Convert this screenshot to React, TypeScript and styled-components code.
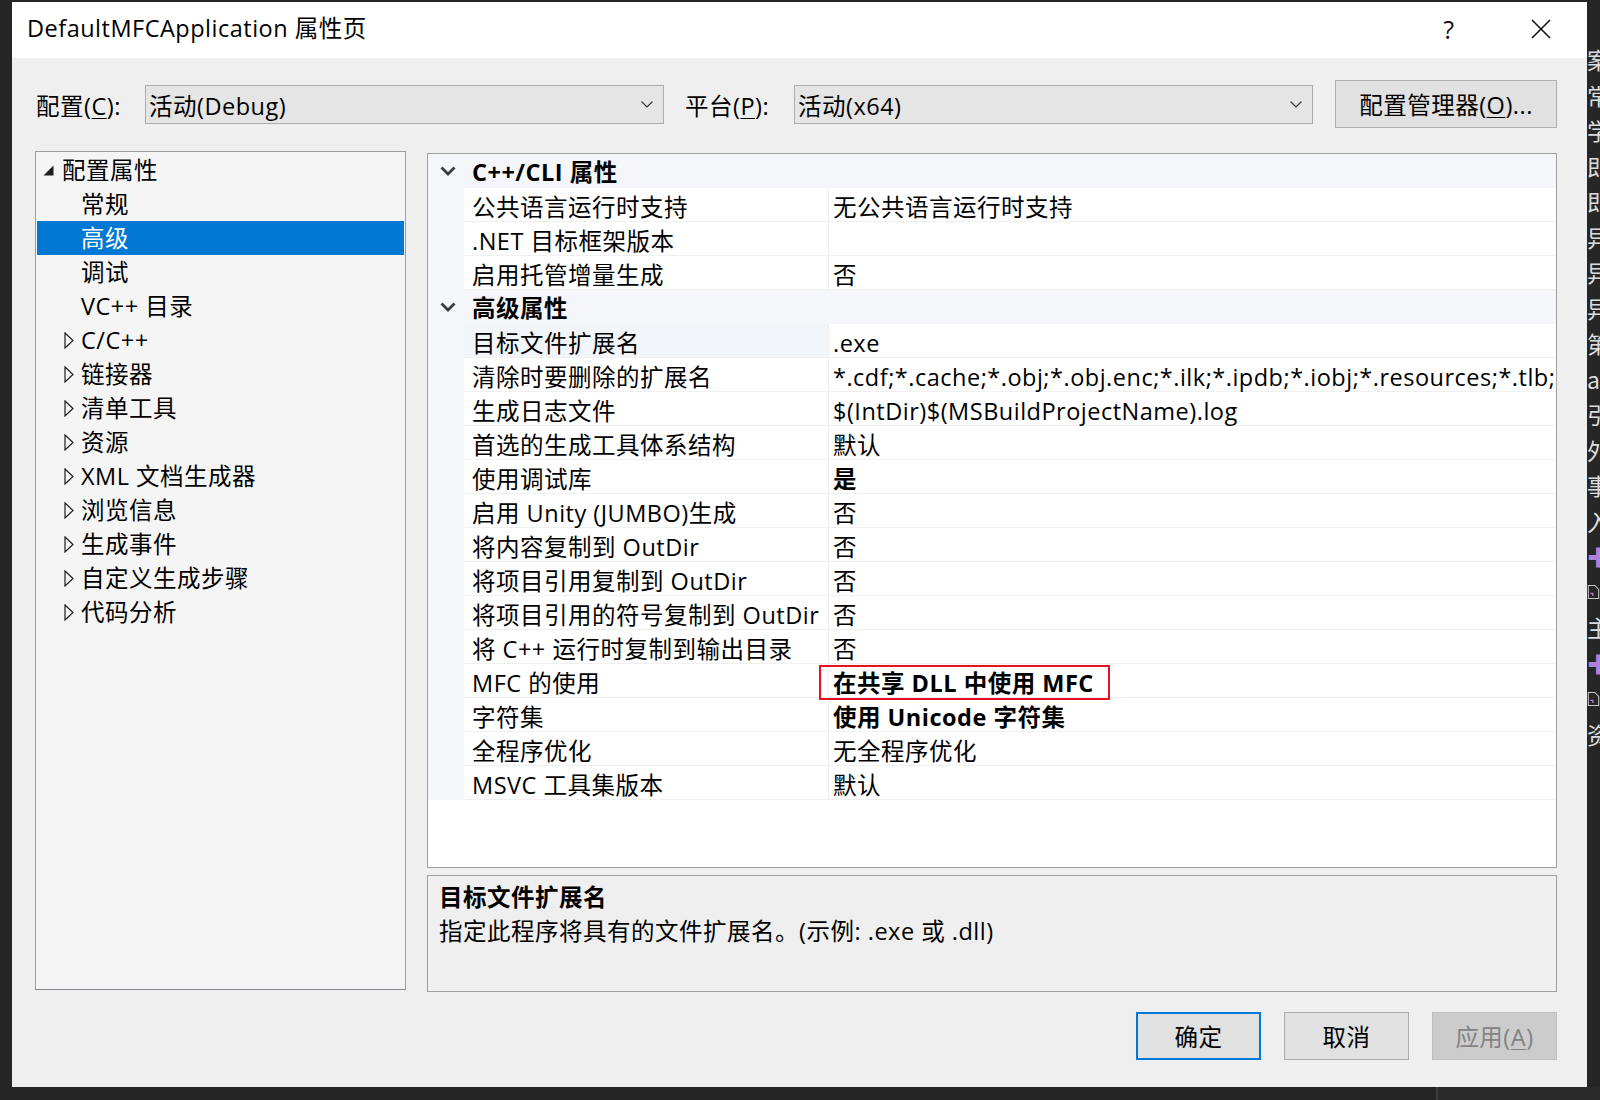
import React from "react";
import styled, { createGlobalStyle, css } from "styled-components";

const UI = `"Open Sans", "Noto Sans CJK SC", sans-serif`;

const Global = createGlobalStyle`
  html, body { margin: 0; padding: 0; background: #262626; }
  body { width: 1600px; height: 1100px; overflow: hidden; }
  #root { width: 1600px; height: 1100px; }
  * { box-sizing: border-box; }
`;

const Page = styled.div`
  width: 1600px;
  height: 1100px;
  display: flex;
  flex-direction: column;
  background: #262626;
`;

const TopArea = styled.div`
  display: flex;
  height: 1087px;
  padding: 2px 0 0 12px;
`;

const Dialog = styled.div`
  width: 1575px;
  height: 1085px;
  display: flex;
  flex-direction: column;
  font-family: ${UI};
  font-size: 23.5px;
  letter-spacing: 0.5px;
  color: #000;
  line-height: 1.36;
`;

const TitleBar = styled.div`
  height: 56px;
  background: #ffffff;
  display: flex;
  align-items: center;
  padding-left: 15px;
`;

const Title = styled.div`
  flex: 1;
  padding-bottom: 2px;
`;

const CaptionButton = styled.div`
  width: 92px;
  height: 56px;
  display: flex;
  align-items: center;
  justify-content: center;
  font-weight: 400;
  font-size: 25px;
  color: #111;
  padding-bottom: 3px;
`;

const Body = styled.div`
  flex: 1;
  background: #efefef;
  display: flex;
  flex-direction: column;
  padding: 22px 30px 27px 23px;
`;

const ConfigRow = styled.div`
  height: 48px;
  display: flex;
  align-items: center;
  padding-left: 1px;
`;

const Label = styled.div<{ $gapLeft?: number }>`
  width: 109px;
  padding-top: 5px;
  margin-left: ${(p) => p.$gapLeft ?? 0}px;
`;

const Combo = styled.div`
  width: 519px;
  height: 39px;
  background: #e5e5e5;
  border: 1px solid #acacac;
  display: flex;
  align-items: center;
  padding: 5px 10px 0 3px;
`;

const ComboText = styled.div`
  flex: 1;
`;

const ChevronWrap = styled.div`
  display: flex;
  margin-top: -4px;
`;

const Key = styled.span`
  text-decoration: underline;
  text-underline-offset: 3px;
  text-decoration-thickness: 1px;
`;

const PushButton = styled.div<{ $variant?: "default" | "primary" | "disabled"; $w: number }>`
  width: ${(p) => p.$w}px;
  height: 48px;
  display: flex;
  align-items: center;
  justify-content: center;
  padding-top: 4px;
  background: #e1e1e1;
  border: 1px solid #adadad;
  ${(p) =>
    p.$variant === "primary" &&
    css`
      border: 2px solid #0078d7;
    `}
  ${(p) =>
    p.$variant === "disabled" &&
    css`
      background: #cccccc;
      border-color: #bfbfbf;
      color: #838383;
    `}
`;

const ManagerButton = styled(PushButton)`
  margin-left: 22px;
`;

const Main = styled.div`
  display: flex;
  gap: 21px;
  margin-top: 23px;
  height: 841px;
`;

const Tree = styled.div`
  width: 372px;
  height: 839px;
  border: 1px solid #9c9c9c;
  border-bottom-color: #828790;
  background: #f5f5f5;
  padding: 1px;
`;

const TreeRow = styled.div<{ $level: number; $selected?: boolean }>`
  height: 34px;
  display: flex;
  align-items: center;
  padding-left: ${(p) => 6 + p.$level * 19}px;
  padding-top: 1px;
  background: ${(p) => (p.$selected ? "#0078d4" : "transparent")};
  color: ${(p) => (p.$selected ? "#ffffff" : "#000000")};
`;

const ArrowBox = styled.div`
  width: 19px;
  height: 33px;
  display: flex;
  align-items: center;
  flex-shrink: 0;
`;

const RightCol = styled.div`
  width: 1130px;
  margin-top: 2px;
  display: flex;
  flex-direction: column;
  gap: 7px;
`;

const Grid = styled.div`
  height: 715px;
  border: 1px solid #a0a0a0;
  background: #ffffff;
  overflow: hidden;
`;

const CatRow = styled.div`
  height: 34px;
  display: flex;
  align-items: center;
  padding-left: 12px;
  padding-top: 4px;
  background: #f4f6fa;
  font-weight: 700;
`;

const CatChevron = styled.svg`
  width: 16px;
  height: 10px;
  margin-right: 16px;
  margin-top: -4px;
  flex-shrink: 0;
`;

const PropRow = styled.div`
  height: 34px;
  display: flex;
`;

const MarginCell = styled.div`
  width: 36px;
  background: #f4f6fa;
  flex-shrink: 0;
`;

const NameCell = styled.div<{ $selected?: boolean }>`
  width: 365px;
  flex-shrink: 0;
  display: flex;
  align-items: center;
  padding-left: 8px;
  padding-top: 6px;
  border-right: 1px solid #eeeeee;
  border-bottom: 1px solid #f0f0f0;
  background: ${(p) => (p.$selected ? "#f2f5fa" : "#ffffff")};
  white-space: nowrap;
`;

const ValueCell = styled.div<{ $bold?: boolean }>`
  flex: 1;
  min-width: 0;
  position: relative;
  display: flex;
  align-items: center;
  padding-left: 4px;
  padding-top: 6px;
  border-bottom: 1px solid #f0f0f0;
  white-space: nowrap;
  font-weight: ${(p) => (p.$bold ? 700 : 400)};
`;

const ValueText = styled.div`
  min-width: 0;
  overflow-x: clip;
  overflow-y: visible;
  white-space: nowrap;
`;

const Highlight = styled.div`
  position: absolute;
  left: -10px;
  top: 1px;
  width: 291px;
  height: 35px;
  border: 2px solid #e81123;
  z-index: 2;
  pointer-events: none;
`;

const Desc = styled.div`
  height: 117px;
  border: 1px solid #a0a0a0;
  background: #efefef;
  padding: 6px 11px;
  display: flex;
  flex-direction: column;
  gap: 2px;
`;

const DescTitle = styled.div`
  font-weight: 700;
`;

const ButtonRow = styled.div`
  margin-top: 20px;
  height: 48px;
  display: flex;
  justify-content: flex-end;
  gap: 23px;
`;

const SideStrip = styled.div`
  width: 13px;
  height: 1085px;
  overflow: hidden;
  padding-top: 40px;
  font-family: "Noto Sans CJK SC", sans-serif;
  font-size: 23px;
  color: #d8d8d8;
  display: flex;
  flex-direction: column;
`;

const SideGlyph = styled.div<{ $purple?: boolean }>`
  height: 35.5px;
  line-height: 35.5px;
  white-space: nowrap;
  color: ${(p) => (p.$purple ? "#b180d7" : "#dcdcdc")};
  display: flex;
  align-items: center;
`;

const BottomStrip = styled.div`
  height: 13px;
  display: flex;
`;

const BottomLeft = styled.div`
  width: 1436px;
  background: #252526;
`;

const BottomDivider = styled.div`
  width: 2px;
  background: #3c3c3c;
`;

const BottomRight = styled.div`
  flex: 1;
  background: #2a2a2a;
`;

const ExpandedArrow = () => (
  <svg width="11" height="11" viewBox="0 0 11 11">
    <polygon points="10.5,0.5 10.5,10.5 0.5,10.5" fill="#1e1e1e" />
  </svg>
);

const CollapsedArrow = styled.svg`
  margin-left: 2px;
`;

const Collapsed = () => (
  <CollapsedArrow width="10" height="17" viewBox="0 0 10 17">
    <polygon points="1,1 9,8.5 1,16" fill="none" stroke="#1e1e1e" strokeWidth="1.2" />
  </CollapsedArrow>
);

const ComboChevron = () => (
  <ChevronWrap>
    <svg width="12" height="7" viewBox="0 0 12 7">
      <polyline points="0.5,0.5 6,6 11.5,0.5" fill="none" stroke="#333" strokeWidth="1.1" />
    </svg>
  </ChevronWrap>
);

const CloseIcon = () => (
  <svg width="20" height="20" viewBox="0 0 20 20">
    <line x1="1" y1="1" x2="19" y2="19" stroke="#111" strokeWidth="1.6" />
    <line x1="19" y1="1" x2="1" y2="19" stroke="#111" strokeWidth="1.6" />
  </svg>
);

const FileIcon = () => (
  <svg width="20" height="22" viewBox="0 0 20 22">
    <path d="M2 1 H12 L18 7 V21 H2 Z" fill="none" stroke="#c8c8c8" strokeWidth="1.6" />
    <path d="M5 13 H9 V17" fill="none" stroke="#b180d7" strokeWidth="2" />
  </svg>
);

type TreeItem = { label: string; level: number; arrow?: "open" | "closed"; selected?: boolean };

const treeItems: TreeItem[] = [
  { label: "配置属性", level: 0, arrow: "open" },
  { label: "常规", level: 1 },
  { label: "高级", level: 1, selected: true },
  { label: "调试", level: 1 },
  { label: "VC++ 目录", level: 1 },
  { label: "C/C++", level: 1, arrow: "closed" },
  { label: "链接器", level: 1, arrow: "closed" },
  { label: "清单工具", level: 1, arrow: "closed" },
  { label: "资源", level: 1, arrow: "closed" },
  { label: "XML 文档生成器", level: 1, arrow: "closed" },
  { label: "浏览信息", level: 1, arrow: "closed" },
  { label: "生成事件", level: 1, arrow: "closed" },
  { label: "自定义生成步骤", level: 1, arrow: "closed" },
  { label: "代码分析", level: 1, arrow: "closed" },
];

type Prop = { name: string; value: string; bold?: boolean; selected?: boolean; mark?: boolean };
type Section = { title: string; props: Prop[] };

const sections: Section[] = [
  {
    title: "C++/CLI 属性",
    props: [
      { name: "公共语言运行时支持", value: "无公共语言运行时支持" },
      { name: ".NET 目标框架版本", value: "" },
      { name: "启用托管增量生成", value: "否" },
    ],
  },
  {
    title: "高级属性",
    props: [
      { name: "目标文件扩展名", value: ".exe", selected: true },
      {
        name: "清除时要删除的扩展名",
        value:
          "*.cdf;*.cache;*.obj;*.obj.enc;*.ilk;*.ipdb;*.iobj;*.resources;*.tlb;*.tli;*.tlh;*.tmp;*.rsp;*.pgc;*.pgd;*.meta;*.tlog;*.manifest;*.res;*.pch;*.exp;*.idb;*.rep;*.xdc;*.pdb;*_manifest.rc;*.bsc;*.sbr;*.xml;*.metagen;*.bi",
      },
      { name: "生成日志文件", value: "$(IntDir)$(MSBuildProjectName).log" },
      { name: "首选的生成工具体系结构", value: "默认" },
      { name: "使用调试库", value: "是", bold: true },
      { name: "启用 Unity (JUMBO)生成", value: "否" },
      { name: "将内容复制到 OutDir", value: "否" },
      { name: "将项目引用复制到 OutDir", value: "否" },
      { name: "将项目引用的符号复制到 OutDir", value: "否" },
      { name: "将 C++ 运行时复制到输出目录", value: "否" },
      { name: "MFC 的使用", value: "在共享 DLL 中使用 MFC", bold: true, mark: true },
      { name: "字符集", value: "使用 Unicode 字符集", bold: true },
      { name: "全程序优化", value: "无全程序优化" },
      { name: "MSVC 工具集版本", value: "默认" },
    ],
  },
];

type Side = { text?: string; purple?: boolean; file?: boolean };
const sideItems: Side[] = [
  { text: "案" }, { text: "常" }, { text: "学" }, { text: "即" }, { text: "即" },
  { text: "异" }, { text: "异" }, { text: "异" }, { text: "第" }, { text: "a" },
  { text: "引" }, { text: "外" }, { text: "事" }, { text: "入" },
  { text: "✚", purple: true }, { file: true }, { text: "主" },
  { text: "✚", purple: true }, { file: true }, { text: "资" },
];

export default function App() {
  return (
    <Page>
      <Global />
      <TopArea>
        <Dialog>
          <TitleBar>
            <Title>DefaultMFCApplication 属性页</Title>
            <CaptionButton>?</CaptionButton>
            <CaptionButton>
              <CloseIcon />
            </CaptionButton>
          </TitleBar>
          <Body>
            <ConfigRow>
              <Label>
                配置(<Key>C</Key>):
              </Label>
              <Combo>
                <ComboText>活动(Debug)</ComboText>
                <ComboChevron />
              </Combo>
              <Label $gapLeft={21}>
                平台(<Key>P</Key>):
              </Label>
              <Combo>
                <ComboText>活动(x64)</ComboText>
                <ComboChevron />
              </Combo>
              <ManagerButton $w={222}>
                配置管理器(<Key>O</Key>)...
              </ManagerButton>
            </ConfigRow>
            <Main>
              <Tree>
                {treeItems.map((t, i) => (
                  <TreeRow key={i} $level={t.level} $selected={t.selected}>
                    <ArrowBox>
                      {t.arrow === "open" && <ExpandedArrow />}
                      {t.arrow === "closed" && <Collapsed />}
                    </ArrowBox>
                    {t.label}
                  </TreeRow>
                ))}
              </Tree>
              <RightCol>
                <Grid>
                  {sections.map((s) => (
                    <React.Fragment key={s.title}>
                      <CatRow>
                        <CatChevron viewBox="0 0 16 10">
                          <polyline
                            points="1.5,1.5 8,8 14.5,1.5"
                            fill="none"
                            stroke="#3c3c3c"
                            strokeWidth="2.8"
                          />
                        </CatChevron>
                        {s.title}
                      </CatRow>
                      {s.props.map((p) => (
                        <PropRow key={p.name}>
                          <MarginCell />
                          <NameCell $selected={p.selected}>{p.name}</NameCell>
                          <ValueCell $bold={p.bold}>
                            <ValueText>{p.value}</ValueText>
                            {p.mark && <Highlight />}
                          </ValueCell>
                        </PropRow>
                      ))}
                    </React.Fragment>
                  ))}
                </Grid>
                <Desc>
                  <DescTitle>目标文件扩展名</DescTitle>
                  <div>指定此程序将具有的文件扩展名。(示例: .exe 或 .dll)</div>
                </Desc>
              </RightCol>
            </Main>
            <ButtonRow>
              <PushButton $w={125} $variant="primary">
                确定
              </PushButton>
              <PushButton $w={125}>取消</PushButton>
              <PushButton $w={125} $variant="disabled">
                应用(<Key>A</Key>)
              </PushButton>
            </ButtonRow>
          </Body>
        </Dialog>
        <SideStrip>
          {sideItems.map((s, i) => (
            <SideGlyph key={i} $purple={s.purple}>
              {s.file ? <FileIcon /> : s.text}
            </SideGlyph>
          ))}
        </SideStrip>
      </TopArea>
      <BottomStrip>
        <BottomLeft />
        <BottomDivider />
        <BottomRight />
      </BottomStrip>
    </Page>
  );
}
